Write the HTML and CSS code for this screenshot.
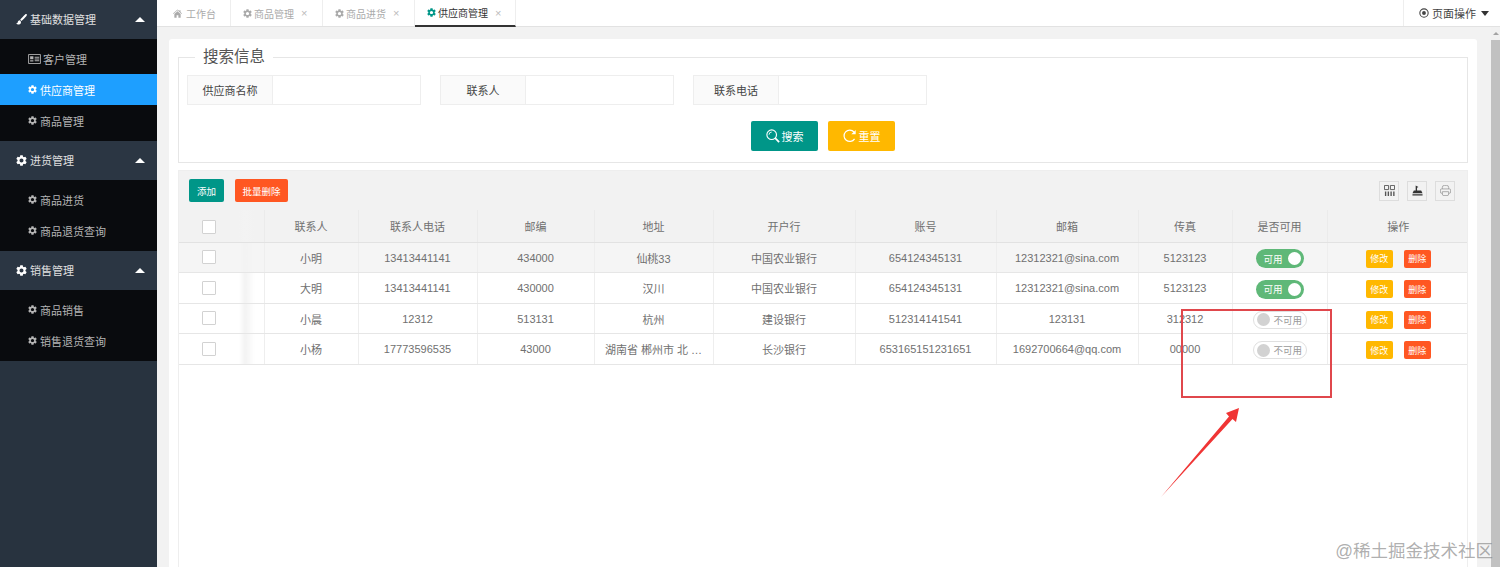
FILE: index.html
```html
<!DOCTYPE html>
<html lang="zh-CN">
<head>
    <meta charset="UTF-8">
    <title>供应商管理</title>
    <link rel="stylesheet" href="styles.css">
</head>
<body>
    <svg class="sprite" xmlns="http://www.w3.org/2000/svg">
        <symbol id="gear" viewBox="2 2 20 20"><path fill-rule="evenodd" d="M19.14 12.94c.04-.3.06-.61.06-.94 0-.32-.02-.64-.07-.94l2.03-1.58a.49.49 0 0 0 .12-.61l-1.92-3.32a.488.488 0 0 0-.59-.22l-2.39.96c-.5-.38-1.03-.7-1.62-.94l-.36-2.54a.484.484 0 0 0-.48-.41h-3.84c-.24 0-.43.17-.47.41l-.36 2.54c-.59.24-1.13.57-1.62.94l-2.39-.96c-.22-.08-.47 0-.59.22L2.74 8.87c-.12.21-.08.47.12.61l2.03 1.58c-.05.3-.09.63-.09.94s.02.64.07.94l-2.03 1.58a.49.49 0 0 0-.12.61l1.92 3.32c.12.22.37.29.59.22l2.39-.96c.5.38 1.03.7 1.62.94l.36 2.54c.05.24.24.41.48.41h3.84c.24 0 .44-.17.47-.41l.36-2.54c.59-.24 1.13-.56 1.62-.94l2.39.96c.22.08.47 0 .59-.22l1.92-3.32c.12-.22.07-.47-.12-.61l-2.01-1.58zM12 15.6c-1.98 0-3.6-1.62-3.6-3.6s1.62-3.6 3.6-3.6 3.6 1.62 3.6 3.6-1.62 3.6-3.6 3.6z"/></symbol>
        <symbol id="brush" viewBox="0 0 14 14"><path d="M13.6.4c-.5-.5-1.3-.4-2 .2C9.400 2.600 6.800 5.300 5.300 7.400l1.500 1.400C8.900 7.200 11.500 4.500 13.300 2.400c.6-.7.800-1.500.3-2zM4.700 8c-1.500.2-2.300 1.200-2.500 2.500-.1.900-.8 1.500-2 1.600 1 1.300 3 1.700 4.500 1 1.300-.6 1.900-1.900 1.500-3.600z"/></symbol>
        <symbol id="card" viewBox="0 0 14 11"><path fill="none" stroke="currentColor" d="M.5.500h13v10H.5z"/><path d="M2.200 2.500h3.600v3.300H2.200zM2.200 7h3.600v1.300H2.200zM7.200 3h5v1h-5zM7.200 5h5v1h-5zM7.200 7h5v1h-5z"/></symbol>
        <symbol id="home" viewBox="0 0 12 11"><path d="M6 0 0 5.400l.6.700L6 1.300l5.400 4.800.6-.7-2-1.800V1H8.500v1.200zM1.800 6.200V11h3V7.800h2.400V11h3V6.200L6 2.500z"/></symbol>
        <symbol id="search" viewBox="0 0 16 16"><circle cx="6.500" cy="6.500" r="5.500" fill="none" stroke="currentColor" stroke-width="1.300"/><path d="M3.500 6.500a3 3 0 0 1 3-3" fill="none" stroke="currentColor"/><path d="m10.500 10.500 4.500 4.500" fill="none" stroke="currentColor" stroke-width="2"/></symbol>
        <symbol id="refresh" viewBox="0 0 16 16"><path d="M13.200 11.200A6.500 6.500 0 1 1 12.600 3.400" fill="none" stroke="currentColor" stroke-width="1.400"/><path d="M14.500 1v5h-5z"/></symbol>
        <symbol id="target" viewBox="0 0 12 12"><circle cx="6" cy="6" r="5" fill="none" stroke="currentColor" stroke-width="1.300"/><circle cx="6" cy="6" r="2.300"/></symbol>
        <symbol id="cols" viewBox="0 0 12 12"><path fill="none" stroke="currentColor" d="M.5.500h4.500v4.500H.5zM7 .500h4.500v4.500H7z"/><path d="M1 7h1.500v5H1zM4 7h1.500v5H4zM7 7h1.500v5H7zM10 7h1.500v5H10z"/></symbol>
        <symbol id="export" viewBox="0 0 12 12"><path d="M4 .5l3 1.700-1.500.8V6H4zM2 6h8l1.500 3h-11zM.5 10h11v1.500H.5z"/></symbol>
        <symbol id="print" viewBox="0 0 14 14"><path fill="none" stroke="currentColor" d="M3 5V3a2.500 2.500 0 0 1 2.500-2.500h3A2.500 2.500 0 0 1 11 3v2M3 10.500H2a1.500 1.500 0 0 1-1.500-1.500V6.500A1.500 1.500 0 0 1 2 5h10a1.500 1.500 0 0 1 1.500 1.500V9a1.500 1.500 0 0 1-1.500 1.500h-1M3 8.500h8v3a2 2 0 0 1-2 2H5a2 2 0 0 1-2-2z"/></symbol>
    </svg>

    <aside class="sidebar">
        <div class="nav-group">
            <svg class="icon-group"><use href="#brush"/></svg>基础数据管理<i class="caret-up"></i>
        </div>
        <ul class="nav-list nav-list-first">
            <li><svg class="icon-card"><use href="#card"/></svg>客户管理</li>
            <li class="active"><svg class="icon-nav"><use href="#gear"/></svg>供应商管理</li>
            <li><svg class="icon-nav"><use href="#gear"/></svg>商品管理</li>
        </ul>
        <div class="nav-group">
            <svg class="icon-group"><use href="#gear"/></svg>进货管理<i class="caret-up"></i>
        </div>
        <ul class="nav-list">
            <li><svg class="icon-nav"><use href="#gear"/></svg>商品进货</li>
            <li><svg class="icon-nav"><use href="#gear"/></svg>商品退货查询</li>
        </ul>
        <div class="nav-group">
            <svg class="icon-group"><use href="#gear"/></svg>销售管理<i class="caret-up"></i>
        </div>
        <ul class="nav-list">
            <li><svg class="icon-nav"><use href="#gear"/></svg>商品销售</li>
            <li><svg class="icon-nav"><use href="#gear"/></svg>销售退货查询</li>
        </ul>
    </aside>

    <div class="main">
        <div class="tabs">
            <div class="tab tab-home"><svg class="icon-tab"><use href="#home"/></svg>工作台</div>
            <div class="tab"><svg class="icon-tab"><use href="#gear"/></svg>商品管理<span class="tab-close">×</span></div>
            <div class="tab"><svg class="icon-tab"><use href="#gear"/></svg>商品进货<span class="tab-close">×</span></div>
            <div class="tab tab-active"><svg class="icon-tab"><use href="#gear"/></svg>供应商管理<span class="tab-close">×</span></div>
            <div class="page-actions"><svg class="icon-target"><use href="#target"/></svg>页面操作<i class="caret-down"></i></div>
        </div>

        <div class="content">
            <div class="work-area">
                <div class="card">
                    <fieldset class="search-box">
                        <legend>搜索信息</legend>
                        <div class="search-row">
                            <div class="field"><label>供应商名称</label><input type="text"></div>
                            <div class="field"><label>联系人</label><input type="text"></div>
                            <div class="field"><label>联系电话</label><input type="text"></div>
                        </div>
                        <div class="search-actions">
                            <button class="btn btn-teal"><svg class="icon-btn"><use href="#search"/></svg>搜索</button>
                            <button class="btn btn-yellow"><svg class="icon-btn"><use href="#refresh"/></svg>重置</button>
                        </div>
                    </fieldset>

                    <div class="panel">
                        <div class="toolbar">
                            <button class="btn-sm btn-add">添加</button>
                            <button class="btn-sm btn-batch">批量删除</button>
                            <div class="tools">
                                <span class="tool"><svg><use href="#cols"/></svg></span>
                                <span class="tool tool-dark"><svg><use href="#export"/></svg></span>
                                <span class="tool tool-light"><svg><use href="#print"/></svg></span>
                            </div>
                        </div>
                        <table class="grid">
                            <colgroup>
                                <col class="w-check"><col class="w-name"><col class="w-phone"><col class="w-zip"><col class="w-addr"><col class="w-bank"><col class="w-acct"><col class="w-mail"><col class="w-fax"><col class="w-state"><col class="w-ops">
                            </colgroup>
                            <thead>
                                <tr>
                                    <th class="cell-check"><span class="check"></span></th>
                                    <th>联系人</th><th>联系人电话</th><th>邮编</th><th>地址</th><th>开户行</th><th>账号</th><th>邮箱</th><th>传真</th><th>是否可用</th><th class="cell-ops">操作</th>
                                </tr>
                            </thead>
                            <tbody>
                                <tr class="row-hover">
                                    <td class="cell-check"><span class="check"></span></td>
                                    <td>小明</td><td>13413441141</td><td>434000</td><td>仙桃33</td><td>中国农业银行</td><td>654124345131</td><td>12312321@sina.com</td><td>5123123</td>
                                    <td><span class="switch switch-on">可用<i></i></span></td>
                                    <td class="cell-ops"><button class="btn-xs btn-edit">修改</button><button class="btn-xs btn-del">删除</button></td>
                                </tr>
                                <tr>
                                    <td class="cell-check"><span class="check"></span></td>
                                    <td>大明</td><td>13413441141</td><td>430000</td><td>汉川</td><td>中国农业银行</td><td>654124345131</td><td>12312321@sina.com</td><td>5123123</td>
                                    <td><span class="switch switch-on">可用<i></i></span></td>
                                    <td class="cell-ops"><button class="btn-xs btn-edit">修改</button><button class="btn-xs btn-del">删除</button></td>
                                </tr>
                                <tr>
                                    <td class="cell-check"><span class="check"></span></td>
                                    <td>小晨</td><td>12312</td><td>513131</td><td>杭州</td><td>建设银行</td><td>512314141541</td><td>123131</td><td>312312</td>
                                    <td><span class="switch switch-off"><i></i>不可用</span></td>
                                    <td class="cell-ops"><button class="btn-xs btn-edit">修改</button><button class="btn-xs btn-del">删除</button></td>
                                </tr>
                                <tr>
                                    <td class="cell-check"><span class="check"></span></td>
                                    <td>小杨</td><td>17773596535</td><td>43000</td><td>湖南省 郴州市 北 …</td><td>长沙银行</td><td>653165151231651</td><td>1692700664@qq.com</td><td>00000</td>
                                    <td><span class="switch switch-off"><i></i>不可用</span></td>
                                    <td class="cell-ops"><button class="btn-xs btn-edit">修改</button><button class="btn-xs btn-del">删除</button></td>
                                </tr>
                            </tbody>
                        </table>
                    </div>
                </div>
            </div>
            <div class="scrollbar"><span class="scroll-up"></span><span class="scroll-thumb"></span></div>
        </div>
    </div>

    <!-- annotation drawn on top of the screenshot -->
    <div class="mark-box"></div>
    <svg class="mark-arrow" viewBox="0 0 90 100"><polygon points="1,89 69,8.500 66,5 79,0 76,14 72.500,11"/></svg>
    <div class="watermark">@稀土掘金技术社区</div>
</body>
</html>
```

FILE: styles.css
```css
* {
    box-sizing: border-box;
}
body {
    margin: 0;
    height: 100vh;
    overflow: hidden;
    display: flex;
    font-family: "Liberation Sans", "Noto Sans CJK SC", sans-serif;
    font-size: 11px;
    color: #707070;
    background: #f2f2f2;
}
.sprite {
    display: none;
}
svg {
    fill: currentColor;
}

/* sidebar */
.sidebar {
    width: 157px;
    flex: none;
    background: #28333f;
    color: #b4b4b4;
}
.nav-group {
    height: 39px;
    display: flex;
    align-items: center;
    padding: 0 0 1px 16px;
    background: #2b3643;
    color: #e0e0e0;
}
.icon-group {
    width: 11px;
    height: 11px;
    margin-right: 3px;
    color: #fff;
}
.caret-up {
    margin-left: auto;
    margin-right: 12px;
    border: 5px solid transparent;
    border-top: 0;
    border-bottom-color: #fff;
}
.nav-list {
    list-style: none;
    margin: 0;
    padding: 4px 0 5px;
    background: #090b0e;
}
.nav-list li {
    height: 31px;
    display: flex;
    align-items: center;
    padding-left: 28px;
}
.nav-list li.active {
    background: #1e9fff;
    color: #fff;
}
.icon-nav {
    width: 9px;
    height: 9px;
    margin-right: 3px;
}
.icon-card {
    width: 13px;
    height: 10px;
    margin-right: 2px;
}

/* tabs */
.main {
    flex: 1;
    min-width: 0;
    display: flex;
    flex-direction: column;
}
.tabs {
    height: 27px;
    flex: none;
    display: flex;
    background: #fff;
    border-bottom: 1px solid #e2e2e2;
    font-size: 10px;
    color: #aaa;
}
.tab {
    width: 92px;
    display: flex;
    align-items: center;
    padding-left: 12px;
    border-right: 1px solid #eee;
}
.tab-home {
    width: 74px;
    padding-left: 16px;
}
.tab-home .icon-tab {
    margin-right: 4px;
}
.tab-active {
    width: 101px;
    color: #333;
    border-bottom: 2px solid #333;
    margin-bottom: -1px;
}
.tab-active .icon-tab {
    color: #009688;
}
.icon-tab {
    width: 9px;
    height: 9px;
    margin-right: 2px;
}
.tab-close {
    margin-left: 7px;
    font-size: 11px;
    color: #bbb;
}
.page-actions {
    margin-left: auto;
    width: 97px;
    display: flex;
    align-items: center;
    padding-left: 15px;
    border-left: 1px solid #eee;
    font-size: 11px;
    color: #444;
}
.icon-target {
    width: 10px;
    height: 10px;
    margin-right: 3px;
}
.caret-down {
    margin-left: 5px;
    border: 4px solid transparent;
    border-bottom: 0;
    border-top-width: 5px;
    border-top-color: #333;
}

/* content */
.content {
    flex: 1;
    min-height: 0;
    display: flex;
}
.work-area {
    flex: 1;
    min-width: 0;
    padding: 12px 14px 0 12px;
}
.card {
    height: 100%;
    display: flex;
    flex-direction: column;
    padding: 7px 9px 0;
    background: #fff;
    border-radius: 3px 3px 0 0;
}
.scrollbar {
    width: 9px;
    flex: none;
    display: flex;
    flex-direction: column;
    align-items: center;
    background: #f1f1f1;
}
.scroll-up {
    margin-top: 5px;
    border: 3px solid transparent;
    border-top: 0;
    border-bottom-color: #a3a3a3;
}
.scroll-thumb {
    width: 100%;
    flex: 1;
    margin-top: 5px;
    background: #c1c1c1;
}

/* search */
.search-box {
    margin: 0;
    padding: 7px 8px 11px;
    border: 1px solid #e6e6e6;
    min-width: 0;
}
.search-box legend {
    margin-left: 8px;
    padding: 0 8px;
    font-size: 15.500px;
    line-height: 22px;
    color: #555;
}
.search-row {
    display: flex;
    gap: 19px;
}
.field {
    width: 234px;
    height: 30px;
    display: flex;
    border: 1px solid #eee;
}
.field label {
    width: 85px;
    flex: none;
    display: flex;
    align-items: center;
    justify-content: center;
    background: #fafafa;
    border-right: 1px solid #eee;
    color: #444;
}
.field input {
    flex: 1;
    min-width: 0;
    border: 0;
    outline: 0;
}
.search-actions {
    display: flex;
    justify-content: center;
    gap: 10px;
    margin-top: 16px;
}
.btn {
    width: 67px;
    height: 30px;
    display: flex;
    align-items: center;
    justify-content: center;
    padding: 0;
    border: 0;
    border-radius: 2px;
    font: inherit;
    color: #fff;
}
.btn-teal {
    background: #009688;
}
.btn-yellow {
    background: #ffb800;
}
.icon-btn {
    width: 14px;
    height: 14px;
    margin-right: 2px;
}

/* table panel */
.panel {
    flex: 1;
    margin-top: 7px;
    border: 1px solid #eee;
    border-bottom: 0;
}
.toolbar {
    height: 39px;
    display: flex;
    align-items: center;
    gap: 11px;
    padding: 0 12px 0 10px;
    background: #f2f2f2;
}
.btn-sm {
    height: 23px;
    padding: 0;
    border: 0;
    border-radius: 2px;
    font: inherit;
    font-size: 9.500px;
    color: #fff;
}
.btn-add {
    width: 35px;
    background: #009688;
}
.btn-batch {
    width: 53px;
    background: #ff5722;
}
.tools {
    margin-left: auto;
    display: flex;
    gap: 8px;
}
.tool {
    width: 20px;
    height: 20px;
    display: flex;
    align-items: center;
    justify-content: center;
    border: 1px solid #ddd;
    color: #555;
}
.tool svg {
    width: 11px;
    height: 11px;
}
.tool-dark {
    color: #333;
}
.tool-light {
    color: #999;
}
.grid {
    width: 100%;
    table-layout: fixed;
    border-collapse: collapse;
    text-align: center;
}
.w-check { width: 85px; }
.w-name { width: 94px; }
.w-phone { width: 119px; }
.w-zip { width: 117px; }
.w-addr { width: 119px; }
.w-bank { width: 142px; }
.w-acct { width: 141px; }
.w-mail { width: 142px; }
.w-fax { width: 94px; }
.w-state { width: 95px; }
.w-ops { width: 140px; }
.grid th {
    height: 32px;
    font-weight: normal;
    background: #f2f2f2;
    border-bottom: 1px solid #e2e2e2;
    border-right: 1px solid #ebebeb;
}
.grid th .check {
    margin-top: 2px;
}
.grid td {
    height: 30.500px;
    padding: 1px 10px 0;
    white-space: nowrap;
    border-bottom: 1px solid #e6e6e6;
    border-right: 1px solid #eee;
}
.grid .cell-check {
    background-image: linear-gradient(to right, transparent 60px, #f3f3f3 66px, transparent 76px);
    padding: 0;
}
.grid .cell-ops {
    border-right: 0;
    padding: 0 0 0 2px;
}
.row-hover td {
    background-color: #f5f5f5;
}
.check {
    display: block;
    width: 14px;
    height: 14px;
    margin-left: 23px;
    background: #fff;
    border: 1px solid #d2d2d2;
    border-radius: 1px;
}
.switch {
    display: inline-flex;
    align-items: center;
    height: 19px;
    margin-top: 2px;
    border-radius: 10px;
    font-size: 9.500px;
    vertical-align: middle;
}
.switch i {
    width: 13px;
    height: 13px;
    border-radius: 50%;
}
.switch-on {
    width: 48px;
    padding: 0 3px 0 8px;
    justify-content: space-between;
    background: #5fb878;
    color: #fff;
}
.switch-on i {
    background: #fff;
}
.switch-off {
    width: 54px;
    height: 18px;
    padding-left: 3px;
    gap: 4px;
    border: 1px solid #e0e0e0;
    background: #fff;
    color: #999;
}
.switch-off i {
    background: #d2d2d2;
}
.btn-xs {
    width: 27px;
    height: 18px;
    padding: 0;
    margin-top: 3px;
    border: 0;
    border-radius: 2px;
    font: inherit;
    font-size: 9px;
    color: #fff;
    vertical-align: middle;
}
.btn-xs + .btn-xs {
    margin-left: 11px;
}
.btn-edit {
    background: #ffb800;
}
.btn-del {
    background: #ff5722;
}

/* annotation */
.mark-box {
    position: absolute;
    left: 1181px;
    top: 309px;
    width: 151px;
    height: 89px;
    border: 2px solid #e0474c;
}
.mark-arrow {
    position: absolute;
    left: 1160px;
    top: 408px;
    width: 90px;
    height: 100px;
    fill: #f03535;
}
.watermark {
    position: absolute;
    right: 7px;
    bottom: 5px;
    font-size: 17.500px;
    line-height: 22px;
    color: rgba(130, 130, 130, 0.65);
}
```
